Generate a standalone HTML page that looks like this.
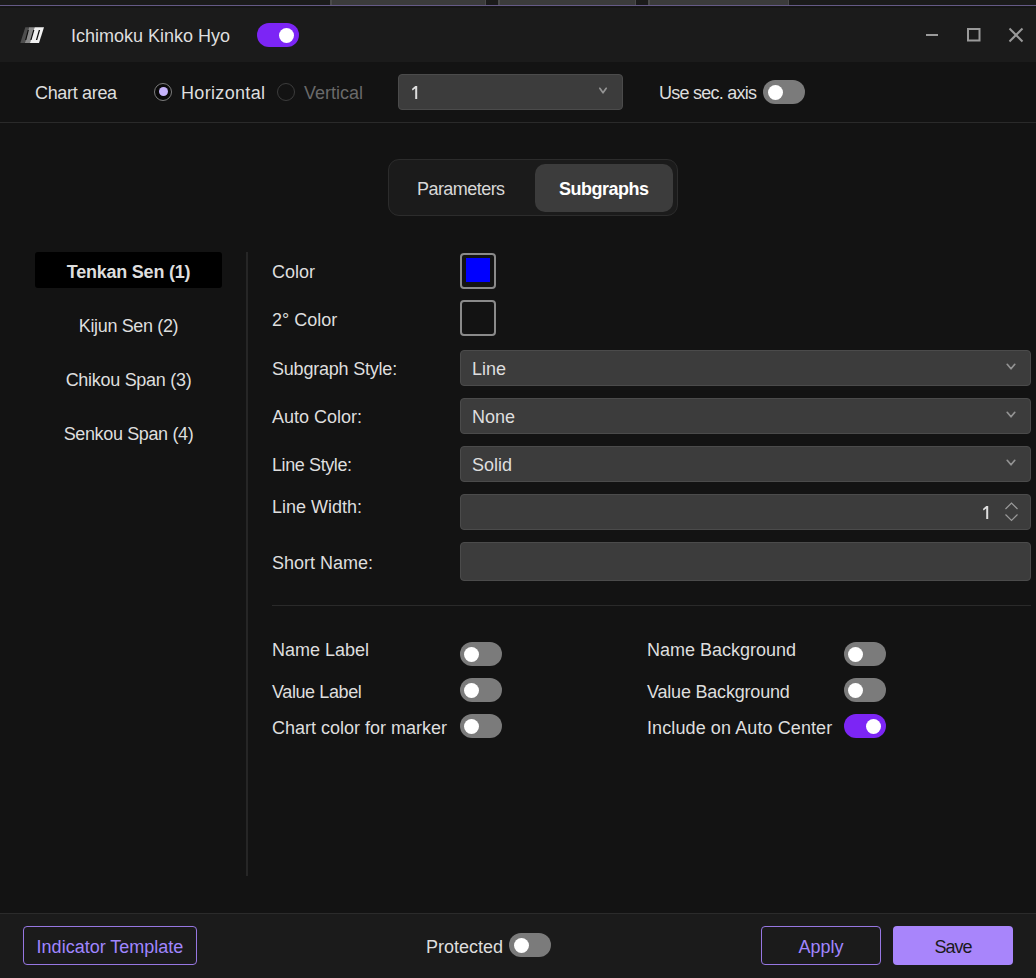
<!DOCTYPE html>
<html><head><meta charset="utf-8">
<style>
*{box-sizing:border-box;margin:0;padding:0}
html,body{width:1036px;height:978px;overflow:hidden;background:#131313;font-family:"Liberation Sans",sans-serif;color:#dedede}
.a{position:absolute}
.t{position:absolute;font-size:18px;line-height:20px;white-space:nowrap}
.tog{position:absolute;width:42px;height:24px;border-radius:12px;background:#7b7b7b}
.tog::after{content:"";position:absolute;left:4.5px;top:4.5px;width:15px;height:15px;border-radius:50%;background:#fff}
.tog.on{background:#7c25f5}
.tog.on::after{left:22px}
.dd{position:absolute;background:#3c3c3c;border:1px solid #4b4b4b;border-radius:4px}
.chev{position:absolute;width:10px;height:6px}
</style></head><body>
<!-- top strip -->
<div class="a" style="left:0;top:0;width:1036px;height:5px;background:#1b1b1b"></div>
<div class="a" style="left:330px;top:0;width:156px;height:5px;background:#3b3b3b;border-left:2px solid #4b4b4b;border-right:1px solid #4b4b4b"></div>
<div class="a" style="left:498px;top:0;width:138px;height:5px;background:#3b3b3b;border-left:2px solid #4b4b4b;border-right:1px solid #4b4b4b"></div>
<div class="a" style="left:648px;top:0;width:141px;height:5px;background:#3b3b3b;border-left:2px solid #4b4b4b;border-right:1px solid #4b4b4b"></div>
<div class="a" style="left:0;top:5px;width:1036px;height:1px;background:#655a86"></div>
<div class="a" style="left:0;top:6px;width:1036px;height:2px;background:#161616"></div>
<!-- title bar -->
<div class="a" style="left:0;top:8px;width:1036px;height:54px;background:#1b1b1b"></div>
<svg class="a" style="left:20px;top:27px" width="24" height="17" viewBox="0 0 24 17">
  <polygon points="5.3,0.3 9.0,0.3 4.9,16 0.3,16" fill="#4e4e4e"/>
  <polygon points="9.0,0.3 14.6,0.3 9.97,16 4.9,16" fill="#8a8a8a"/>
  <polygon points="14.6,0.3 24,0.3 19,16 9.97,16" fill="#f2f2f2"/>
  <polygon points="7.7,3 8.9,3 6.3,13 5.1,13" fill="#0c0c0c"/>
  <polygon points="13.2,3 14.4,3 11.5,13 10.3,13" fill="#0c0c0c"/>
  <polygon points="18.8,3 20.1,3 17.2,13 15.9,13" fill="#0c0c0c"/>
</svg>
<div class="t" style="left:71px;top:26px">Ichimoku Kinko Hyo</div>
<div class="tog on" style="left:257px;top:23px"></div>
<svg class="a" style="left:920px;top:22px" width="110" height="26" viewBox="0 0 110 26">
  <line x1="6" y1="13" x2="18" y2="13" stroke="#9a9a9a" stroke-width="2"/>
  <rect x="48" y="7" width="11.5" height="11.5" fill="none" stroke="#9a9a9a" stroke-width="2"/>
  <line x1="89.5" y1="6.5" x2="102.5" y2="19.5" stroke="#9a9a9a" stroke-width="2"/>
  <line x1="102.5" y1="6.5" x2="89.5" y2="19.5" stroke="#9a9a9a" stroke-width="2"/>
</svg>
<!-- chart area row -->
<div class="a" style="left:0;top:122px;width:1036px;height:1px;background:#2a2a2a"></div>
<div class="t" style="left:35px;top:83px;letter-spacing:-0.33px">Chart area</div>
<div class="a" style="left:154px;top:83px;width:18px;height:18px;border-radius:50%;border:1.6px solid #7d7d7d;background:#0a0a0a"></div>
<div class="a" style="left:158.5px;top:87px;width:9px;height:9px;border-radius:50%;background:#c6b3fb"></div>
<div class="t" style="left:181px;top:83px;letter-spacing:0.33px">Horizontal</div>
<div class="a" style="left:277px;top:83px;width:18px;height:18px;border-radius:50%;border:1.6px solid #3c3c3c"></div>
<div class="t" style="left:304px;top:83px;color:#6a6a6a">Vertical</div>
<div class="dd" style="left:398px;top:74px;width:225px;height:36px"></div>
<svg class="a" style="left:411px;top:85px" width="8" height="15" viewBox="0 0 8 15"><path d="M4.2,1 L6.2,1 L6.2,14 L4.2,14 L4.2,3.6 L1.6,5.4 L0.9,3.9 Z" fill="#dedede"/></svg>
<svg class="a" style="left:598px;top:86px" width="10" height="9" viewBox="0 0 10 9"><polyline points="1.8,2.3 5,6.8 8.2,2.3" fill="none" stroke="#939393" stroke-width="1.7" stroke-linecap="round" stroke-linejoin="round"/></svg>
<div class="t" style="left:659px;top:83px;letter-spacing:-0.75px">Use sec. axis</div>
<div class="tog" style="left:763px;top:80px"></div>
<!-- tabs -->
<div class="a" style="left:388px;top:159px;width:290px;height:57px;border-radius:11px;background:#1b1b1b;border:1px solid #2c2c2c"></div>
<div class="a" style="left:535px;top:164px;width:138px;height:48px;border-radius:10px;background:#3c3c3c"></div>
<div class="t" style="left:417px;top:179px;color:#d8d8d8;letter-spacing:-0.55px">Parameters</div>
<div class="t" style="left:559px;top:179px;font-weight:bold;color:#fff;letter-spacing:-0.5px">Subgraphs</div>
<!-- left list -->
<div class="a" style="left:35px;top:252px;width:187px;height:36px;border-radius:3px;background:#000"></div>
<div class="t" style="left:35px;width:187px;text-align:center;top:262px;font-weight:bold;letter-spacing:-0.23px">Tenkan Sen (1)</div>
<div class="t" style="left:35px;width:187px;text-align:center;top:316px;letter-spacing:-0.36px">Kijun Sen (2)</div>
<div class="t" style="left:35px;width:187px;text-align:center;top:370px;letter-spacing:-0.29px">Chikou Span (3)</div>
<div class="t" style="left:35px;width:187px;text-align:center;top:424px;letter-spacing:-0.36px">Senkou Span (4)</div>
<div class="a" style="left:246px;top:252px;width:2px;height:624px;background:#262626"></div>
<!-- form -->
<div class="t" style="left:272px;top:262px">Color</div>
<div class="a" style="left:460px;top:253px;width:36px;height:36px;border:2px solid #8a8a8a;border-radius:4px"></div>
<div class="a" style="left:466px;top:258px;width:24px;height:24px;background:#0000ff"></div>
<div class="t" style="left:272px;top:310px">2° Color</div>
<div class="a" style="left:460px;top:300px;width:36px;height:36px;border:2px solid #8a8a8a;border-radius:4px"></div>

<div class="t" style="left:272px;top:359px;letter-spacing:-0.21px">Subgraph Style:</div>
<div class="dd" style="left:460px;top:350px;width:571px;height:36px"></div>
<div class="t" style="left:472px;top:359px">Line</div>
<svg class="a" style="left:1006px;top:362px" width="10" height="9" viewBox="0 0 10 9"><polyline points="1.2,2.3 5,6.8 8.8,2.3" fill="none" stroke="#939393" stroke-width="1.7" stroke-linecap="round" stroke-linejoin="round"/></svg>

<div class="t" style="left:272px;top:407px">Auto Color:</div>
<div class="dd" style="left:460px;top:398px;width:571px;height:36px"></div>
<div class="t" style="left:472px;top:407px">None</div>
<svg class="a" style="left:1006px;top:410px" width="10" height="9" viewBox="0 0 10 9"><polyline points="1.2,2.3 5,6.8 8.8,2.3" fill="none" stroke="#939393" stroke-width="1.7" stroke-linecap="round" stroke-linejoin="round"/></svg>

<div class="t" style="left:272px;top:455px;letter-spacing:-0.4px">Line Style:</div>
<div class="dd" style="left:460px;top:446px;width:571px;height:36px"></div>
<div class="t" style="left:472px;top:455px">Solid</div>
<svg class="a" style="left:1006px;top:458px" width="10" height="9" viewBox="0 0 10 9"><polyline points="1.2,2.3 5,6.8 8.8,2.3" fill="none" stroke="#939393" stroke-width="1.7" stroke-linecap="round" stroke-linejoin="round"/></svg>

<div class="t" style="left:272px;top:497px">Line Width:</div>
<div class="dd" style="left:460px;top:494px;width:571px;height:36px"></div>
<svg class="a" style="left:982px;top:505px" width="8" height="15" viewBox="0 0 8 15"><path d="M4.2,1 L6.2,1 L6.2,14 L4.2,14 L4.2,3.6 L1.6,5.4 L0.9,3.9 Z" fill="#dedede"/></svg>
<svg class="a" style="left:1004px;top:501px" width="15" height="22" viewBox="0 0 15 22">
  <polyline points="1.5,8 7.5,2 13.5,8" fill="none" stroke="#9a9a9a" stroke-width="1.2"/>
  <polyline points="1.5,13.5 7.5,19.5 13.5,13.5" fill="none" stroke="#9a9a9a" stroke-width="1.2"/>
</svg>

<div class="t" style="left:272px;top:553px">Short Name:</div>
<div class="dd" style="left:460px;top:542px;width:571px;height:39px"></div>

<div class="a" style="left:272px;top:605px;width:759px;height:1px;background:#2a2a2a"></div>

<div class="t" style="left:272px;top:640px">Name Label</div>
<div class="tog" style="left:459.5px;top:642px"></div>
<div class="t" style="left:272px;top:682px;letter-spacing:-0.4px">Value Label</div>
<div class="tog" style="left:459.5px;top:678px"></div>
<div class="t" style="left:272px;top:718px">Chart color for marker</div>
<div class="tog" style="left:459.5px;top:714px"></div>

<div class="t" style="left:647px;top:640px">Name Background</div>
<div class="tog" style="left:843.5px;top:642px"></div>
<div class="t" style="left:647px;top:682px;letter-spacing:-0.2px">Value Background</div>
<div class="tog" style="left:843.5px;top:678px"></div>
<div class="t" style="left:647px;top:718px;letter-spacing:0.1px">Include on Auto Center</div>
<div class="tog on" style="left:843.5px;top:714px"></div>

<!-- footer -->
<div class="a" style="left:0;top:913px;width:1036px;height:1px;background:#2b2b2b"></div>
<div class="a" style="left:0;top:914px;width:1036px;height:64px;background:#1b1b1b"></div>
<div class="a" style="left:23px;top:926px;width:174px;height:39px;border:1.8px solid #9777e2;border-radius:4px"></div>
<div class="t" style="left:23px;width:174px;text-align:center;top:937px;color:#a086ff">Indicator Template</div>
<div class="t" style="left:426px;top:937px">Protected</div>
<div class="tog" style="left:509px;top:933px"></div>
<div class="a" style="left:761px;top:926px;width:120px;height:39px;border:1.8px solid #9777e2;border-radius:4px"></div>
<div class="t" style="left:761px;width:120px;text-align:center;top:937px;color:#a086ff">Apply</div>
<div class="a" style="left:893px;top:926px;width:120px;height:39px;border-radius:4px;background:#a885fb"></div>
<div class="t" style="left:893px;width:120px;text-align:center;top:937px;color:#1b1b1b;letter-spacing:-1px">Save</div>
</body></html>
